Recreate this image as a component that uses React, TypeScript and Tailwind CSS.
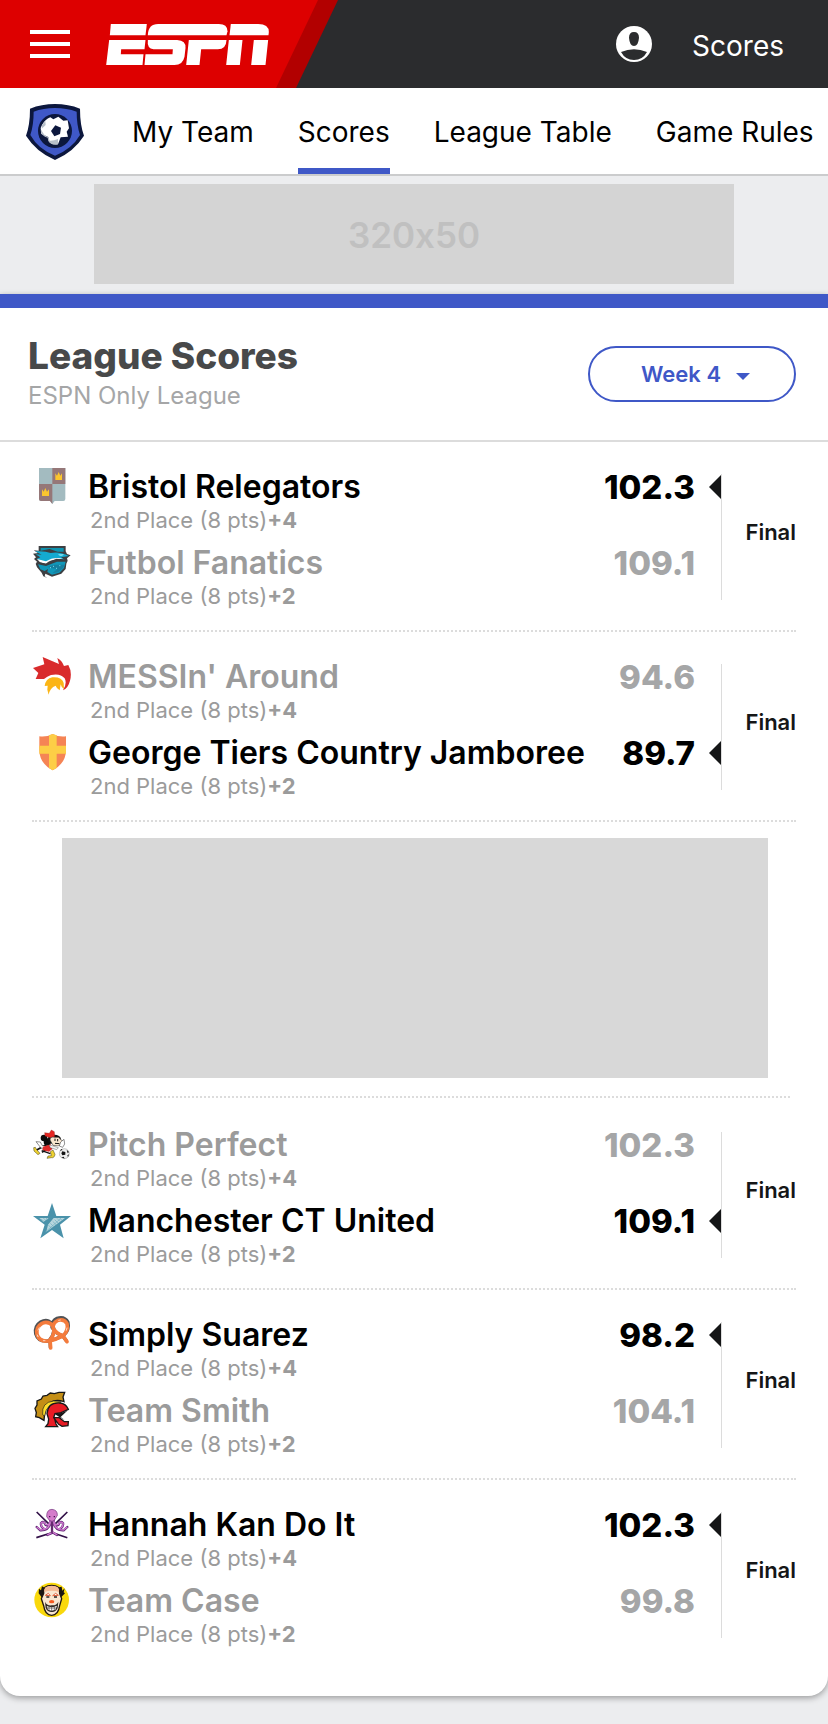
import type { ReactNode } from "react";

type Team = { name: string; gain: string; score: string; won: boolean; icon: ReactNode };

const Crest = ({ box, children }: { box: string; children: ReactNode }) => (
  <svg viewBox={box} className="size-10 shrink-0" aria-hidden="true">
    {children}
  </svg>
);

const bristol = (
  <Crest box="36 48 120 120">
    <path d="M57 54H136V147Q136 153 130 153H104L97 162L90 153H63Q57 153 57 147Z" fill="#a3bbc0" />
    <path d="M97 54H136V102H97ZM57 102H97V162L90 153H63Q57 153 57 147Z" fill="#957778" />
    <path d="M106 70L111 77L116 66L121 77L126 70V90H106ZM66 118L71 125L76 114L81 125L87 118V138H66Z" fill="#fbc62e" />
  </Crest>
);
const futbol = (
  <Crest box="36 276 120 120">
    <path d="M56 288H137V304L141 312L152 316L141 325L143 332L139 341L137 357L124 371L96 380L76 371L74 379L82 384L70 379L65 368L51 352L47 341L52 336L42 327L48 322L39 311L54 309L41 301L56 302Z" fill="#3d3f42" />
    <path d="M62 294H131V305H113L89 297L62 302Z" fill="#0d94b0" />
    <path d="M45 304Q75 302 92 309Q118 303 147 318L123 322L134 329L106 324L79 337L61 332L50 327L61 322L47 313L65 314Z" fill="#14aad0" />
    <path d="M51 327L78 334Q101 319 129 326L113 328Q91 329 78 341L60 337Z" fill="#fff" />
    <path d="M50 337L78 343L110 328L136 331" fill="none" stroke="#3d3f42" strokeWidth="4" />
    <path d="M54 343L78 348L111 335H137L132 354L118 368L96 374L82 366L84 357L74 363L61 358Z" fill="#1097b9" />
    <path d="M82 351L103 344H134L129 354L115 366L97 370L111 358Z" fill="#167f9f" />
    <path d="M116 314H130L123 317ZM90 353H93M99 349H102M108 355H111M118 347H121" fill="none" stroke="#7bdcec" strokeWidth="3" />
  </Crest>
);
const messi = (
  <Crest box="36 48 120 120">
    <path d="M39 84L73 73L68 51L117 72L112 54Q126 62 132 78L145 75Q157 96 150 122Q145 143 129 151Q142 130 134 115Q121 99 93 105Q81 109 72 117H47L55 99Z" fill="#d92b2c" />
    <path d="M74 138Q77 116 97 112Q126 110 131 129L132 147Q124 143 122 133L119 151Q110 146 107 137Q90 143 86 164L82 149L83 137Z" fill="#fbb516" />
  </Crest>
);
const george = (
  <Crest box="36 276 120 120">
    <path d="M58 289Q79 292 98 282Q117 292 138 289V327Q139 369 98 391Q57 369 58 327Z" fill="#f58455" />
    <path d="M87 286L98 282L110 286V317H138V341H110V384L98 391L87 384V341H58V317H87Z" fill="#fdce46" />
  </Crest>
);
const pitch = (
  <Crest box="36 42 120 120">
    <circle cx="72" cy="84" r="10" fill="#0b0b0b" />
    <circle cx="82" cy="96" r="11" fill="#0b0b0b" />
    <ellipse cx="103" cy="88" rx="20" ry="14" fill="#111" />
    <path d="M74 68L88 70L94 60L103 65L104 80L91 83L75 78Z" fill="#e52722" stroke="#7e1715" strokeWidth="1" />
    <path d="M90 90Q91 79 104 82L116 82Q122 91 131 94L128 102Q115 111 99 106Z" fill="#f9e7cf" stroke="#222" strokeWidth="1.5" />
    <path d="M105 86V93M113 87V94M105 100L118 101" stroke="#111" strokeWidth="3" />
    <path d="M83 102L62 113L49 121M89 112L75 121L66 127" fill="none" stroke="#111" strokeWidth="5" />
    <path d="M48 95L61 96L67 107L83 109L80 116L63 114ZM122 96L132 88L134 102L128 112L118 108Z" fill="#fff" stroke="#222" strokeWidth="1.5" />
    <path d="M69 110L92 103L97 117L87 125L67 120Z" fill="#e02b2a" />
    <path d="M87 104L115 113L110 119L91 113Z" fill="#f4f4f4" stroke="#222" />
    <path d="M41 113Q47 108 50 119L60 130L54 134L42 123ZM91 125L99 120L105 133Q103 145 94 143L81 145L84 138L94 137Z" fill="#eed231" stroke="#423b12" strokeWidth="1.5" />
    <path d="M65 122L91 131" stroke="#111" strokeWidth="4" />
    <circle cx="133" cy="131" r="15" fill="#eee" stroke="#666" />
    <path d="M127 124L136 126L136 134L127 136L124 130ZM119 122L124 117L128 120ZM140 119L147 126L143 130ZM142 136L147 133L144 142ZM124 142L131 140L134 146Z" fill="#111" />
  </Crest>
);
const star = (
  <Crest box="36 270 120 120">
    <path d="M96 279L109 318H153L120 344L131 385L96 360L61 385L74 344L39 318H83Z" fill="#4a92aa" />
    <path d="M58 324H86L70 336ZM101 324H135L116 338L79 365L84 344Z" fill="#b8d6dd" />
    <path d="M62 327L72 334M70 324L77 331M78 324L83 329M85 345L94 354M91 340L101 350M98 334L108 344M104 329L114 339M111 325L120 334M119 325L127 331M76 366L123 325" stroke="#6eadc0" strokeWidth="2" />
  </Crest>
);
const pretzel = (
  <Crest box="36 42 120 120">
    <g fill="none" strokeLinecap="round" strokeLinejoin="round">
      <path d="M96 72Q82 54 62 66Q43 78 47 101Q54 125 82 123Q105 120 131 106Q149 90 144 67Q134 48 111 55Q95 62 96 82M96 74Q110 94 90 118L91 142M96 82Q107 103 128 107L139 122" stroke="#515356" strokeWidth="10" />
      <path d="M99 78Q85 62 66 70Q47 81 51 103Q58 125 82 123Q107 120 130 106Q146 92 141 71Q133 56 114 61Q99 67 99 84M98 78Q108 98 90 120L92 144M99 84Q109 102 128 107L141 125" stroke="#f47b3c" strokeWidth="11" />
      <path d="M54 90L58 83M52 105L54 110M70 122L75 122M116 61L121 60M141 84L139 91" stroke="#fff" strokeWidth="2" />
    </g>
  </Crest>
);
const helmet = (
  <Crest box="36 270 120 120">
    <path d="M72 361L58 353L47 350L49 338L45 325L51 315L51 303L64 297L69 288L81 286L91 279L103 281L117 277H134L129 291L132 305Q108 296 92 307Q73 320 72 361Z" fill="#c48f16" stroke="#171717" strokeWidth="4" />
    <path d="M68 344Q64 307 101 303L124 305L119 309Q79 308 74 348Z" fill="#ffe02a" stroke="#171717" strokeWidth="2" />
    <path d="M77 380H113L108 372L103 353L118 353L133 365L145 365L144 377L126 379L116 373L101 353L105 341L120 339L145 328Q138 311 120 309Q84 306 81 341L86 357L84 371Z" fill="#e81c25" stroke="#171717" strokeWidth="4" />
    <path d="M105 343L123 339L142 332L122 351L134 360L118 351Z" fill="#171717" />
  </Crest>
);
const octopus = (
  <Crest box="36 42 120 120">
    <path d="M50 66L88 103M142 66L104 103M49 143L93 129M142 143L100 129" stroke="#321047" strokeWidth="5" />
    <g fill="none" strokeLinecap="round">
      <path d="M91 87Q91 111 77 105Q72 91 63 99Q61 112 75 118M101 87Q101 111 115 105Q120 91 129 99Q131 112 117 118M91 99Q86 122 61 121L50 111M101 99Q106 122 131 121L142 111M96 92V129L82 135M96 126L111 135" stroke="#5e2574" strokeWidth="7" />
      <path d="M91 85Q91 109 77 103Q71 92 63 99Q62 113 76 117M101 85Q101 109 115 103Q121 92 129 99Q130 113 116 117M91 98Q86 120 62 120L51 112M101 98Q106 120 130 120L141 112M96 88V128L83 134M96 125L110 134" stroke="#cf79cf" strokeWidth="4" />
    </g>
    <path d="M88 91L80 80Q79 59 96 58Q113 60 112 76L103 91L96 94Z" fill="#d57ccb" stroke="#70347b" strokeWidth="2" />
    <path d="M87 80H91M101 80H105M96 95V130" stroke="#43154f" strokeWidth="4" />
  </Crest>
);
const clown = (
  <Crest box="36 270 120 120">
    <circle cx="95" cy="330" r="52" fill="#f9d80c" />
    <path d="M66 323L56 310L57 296L63 301L66 289L74 293V323ZM117 323V292L125 290L127 302L134 295L131 307L135 310L124 321Z" fill="#191512" />
    <path d="M71 310Q68 286 95 286Q122 286 119 310L125 326L119 347Q115 376 95 376Q75 376 71 347L64 326Z" fill="#f8e6d0" stroke="#21170f" strokeWidth="4" />
    <path d="M73 306Q69 287 95 287Q121 287 117 306Q96 298 73 306Z" fill="#f4ba95" />
    <path d="M76 316L85 310L91 317ZM98 317L107 310L115 316Z" fill="#fff" stroke="#df603b" strokeWidth="3" />
    <path d="M79 321H88M102 321H111" stroke="#222" strokeWidth="4" />
    <ellipse cx="95" cy="335" rx="8" ry="5" fill="#f65a20" />
    <path d="M75 335Q81 348 95 346Q110 347 115 335L113 354Q107 367 95 366Q82 366 77 354Z" fill="#302a25" />
    <path d="M80 348L90 351H101L111 347L106 359L95 362L84 359Z" fill="#fff" />
    <path d="M87 348V361M95 349V363M103 348V361M80 354H110" stroke="#484039" strokeWidth="2" />
  </Crest>
);

const early: Team[][] = [
  [
    { name: "Bristol Relegators", gain: "+4", score: "102.3", won: true, icon: bristol },
    { name: "Futbol Fanatics", gain: "+2", score: "109.1", won: false, icon: futbol },
  ],
  [
    { name: "MESSIn' Around", gain: "+4", score: "94.6", won: false, icon: messi },
    { name: "George Tiers Country Jamboree", gain: "+2", score: "89.7", won: true, icon: george },
  ],
];
const late: Team[][] = [
  [
    { name: "Pitch Perfect", gain: "+4", score: "102.3", won: false, icon: pitch },
    { name: "Manchester CT United", gain: "+2", score: "109.1", won: true, icon: star },
  ],
  [
    { name: "Simply Suarez", gain: "+4", score: "98.2", won: true, icon: pretzel },
    { name: "Team Smith", gain: "+2", score: "104.1", won: false, icon: helmet },
  ],
  [
    { name: "Hannah Kan Do It", gain: "+4", score: "102.3", won: true, icon: octopus },
    { name: "Team Case", gain: "+2", score: "99.8", won: false, icon: clown },
  ],
];

function TeamRow({ team }: { team: Team }) {
  return (
    <div className="flex h-[76px] items-start">
      {team.icon}
      <div className="ml-4 min-w-0 flex-1 whitespace-nowrap">
        <h2 className={`text-[32px] leading-[42px] font-semibold ${team.won ? "text-black" : "text-[#9b9b9b]"}`}>{team.name}</h2>
        <p className="-mt-0.5 pl-0.5 text-[22px] leading-7 text-[#9b9b9b]">
          2nd Place (8 pts)<b>{team.gain}</b>
        </p>
      </div>
      <span className={`text-[33px] leading-[42px] font-extrabold ${team.won ? "text-black" : "text-[#a5a6a7]"}`}>{team.score}</span>
      <svg viewBox="0 0 13 26" className={`mt-2 -mr-px ml-3.5 h-[26px] w-[13px] shrink-0 ${team.won ? "" : "invisible"}`} aria-hidden="true">
        <path d="M13 0V26L0 13Z" fill="#151617" />
      </svg>
    </div>
  );
}

function Match({ teams, last = false }: { teams: Team[]; last?: boolean }) {
  return (
    <article className={`mx-8 border-b-2 border-dotted pt-6 pb-3 ${last ? "border-transparent" : "border-[#dcdcdc]"}`}>
      <div className="flex">
        <div className="min-w-0 flex-1">
          {teams.map((team) => (
            <TeamRow key={team.name} team={team} />
          ))}
        </div>
        <div className="mt-2 flex h-[126px] w-[75px] shrink-0 items-start justify-end border-l border-[#dcdcdc] pt-11 text-[22px] leading-7 font-semibold text-[#151617]">
          Final
        </div>
      </div>
    </article>
  );
}

export default function App() {
  return (
    <div className="min-h-screen bg-[#ecedef] pb-7 font-['Inter',sans-serif]">
      <header className="flex h-[88px] items-center justify-between bg-[#2b2c2e] pr-11 text-white">
        <div className="h-full w-[338px] bg-[#b20000] [clip-path:polygon(0_0,100%_0,296px_100%,0_100%)]">
          <div className="flex h-full w-[318px] items-center bg-[#dd0000] pl-[30px] [clip-path:polygon(0_0,100%_0,276px_100%,0_100%)]">
            <button type="button" aria-label="Menu" className="flex w-10 flex-col gap-2">
              <span className="h-1 w-full bg-white" />
              <span className="h-1 w-full bg-white" />
              <span className="h-1 w-full bg-white" />
            </button>
            <a href="#home" aria-label="ESPN" className="ml-9">
              <svg viewBox="0 0 488 123" className="h-[41px] w-[163px]" fill="#fff">
                <path d="M14 0H122L118 34H11Z" />
                <path d="M125 34Q126 0 156 0H338Q364 0 364 22L361 34Z" />
                <path d="M374 0H456Q488 0 488 24L487 34H370Z" />
                <path d="M9 48H118L115 76H45L44 91H112L109 123H0Z" />
                <path d="M125 48H213Q240 50 238 72L235 98Q230 123 205 123H115L118 91H199L200 76H142Q122 74 125 48Z" />
                <path d="M248 48H361Q360 76 335 76H285L280 123H240Z" />
                <path d="M368 48H409L401 123H360ZM443 48H486L478 123H435Z" />
              </svg>
            </a>
          </div>
        </div>
        <div className="flex items-center gap-10">
          <a href="#account" aria-label="Account">
            <svg viewBox="0 0 108 108" className="size-9">
              <circle cx="54" cy="54" r="54" fill="#fff" />
              <path d="M39 35Q39 18 54 18Q69 18 69 35Q67 60 54 60Q41 60 39 35ZM15 78Q54 62 93 78Q80 102 54 102Q28 102 15 78Z" fill="#2b2c2e" />
            </svg>
          </a>
          <a href="#scores" className="pt-1 text-[28px] leading-9">Scores</a>
        </div>
      </header>

      <nav className="flex h-[88px] items-center border-b-2 border-[#cbcccd] bg-white pl-[26px] text-[28px] leading-9 whitespace-nowrap text-black">
        <a href="#league" aria-label="League home" className="mr-12 shrink-0 pt-0.5">
          <svg viewBox="78 312 174 168" className="h-14 w-[58px]">
            <path d="M165 312Q205 312 240 326Q240 375 252 407Q222 455 165 480Q108 455 78 407Q90 375 90 326Q125 312 165 312Z" fill="#0c173d" />
            <path d="M165 324Q200 324 230 335Q230 375 240 405Q215 448 165 467Q115 448 91 405Q101 375 101 335Q130 324 165 324Z" fill="#3f58c7" />
            <circle cx="165" cy="393" r="51" fill="#0c173d" />
            <path d="M126 375Q135 358 151 352L160 358L175 350L190 362L203 361L207 385L200 395L204 410L182 412L174 433Q153 435 146 424L145 411L124 402L122 384Z" fill="#fff" />
            <path d="M124 389Q131 407 145 411L149 422Q160 423 174 417V433Q153 437 145 422L143 413Q125 409 122 392ZM126 375L136 363L137 375L125 386Z" fill="#b8c0ca" />
            <path d="M166 376L183 383L180 402L163 409L153 393Z" fill="#0c173d" />
          </svg>
        </a>
        <div className="flex h-full items-stretch gap-11">
          <a href="#team" className="flex items-center pt-0.5">My Team</a>
          <a href="#scores" aria-current="page" className="flex items-center border-b-[6px] border-[#3f58c7] pt-2">Scores</a>
          <a href="#table" className="flex items-center pt-0.5">League Table</a>
          <a href="#rules" className="flex items-center pt-0.5">Game Rules</a>
        </div>
      </nav>

      <aside className="px-6 pt-2 pb-2.5">
        <div className="mx-auto flex h-[100px] max-w-[640px] items-center justify-center bg-[#d4d4d4] pt-0.5 text-[35px] font-semibold text-[#c0c0c0] [font-feature-settings:'calt'_0]">320x50</div>
      </aside>

      <main className="rounded-b-[20px] border-t-[14px] border-[#3f58c7] bg-white pb-[26px] shadow-[0_2px_6px_rgba(0,0,0,0.35)]">
        <div className="flex items-start justify-between border-b-2 border-[#dcdcdc] pt-[26px] pr-8 pb-6 pl-7">
          <div className="pb-0.5">
            <h1 className="text-[37px] leading-11 font-extrabold text-[#48494a]">League Scores</h1>
            <p className="text-2xl leading-9 text-[#a5a6a7]">ESPN Only League</p>
          </div>
          <div className="relative mt-3">
            <select aria-label="Week" className="h-14 w-52 appearance-none rounded-full border-2 border-[#3f58c7] bg-white pl-[51px] text-[22px] font-semibold text-[#3f58c7]">
              <option>Week 4</option>
              <option>Week 3</option>
              <option>Week 2</option>
              <option>Week 1</option>
            </select>
            <svg viewBox="0 0 14 7" className="pointer-events-none absolute top-[27px] right-[46px] h-[7px] w-3.5" aria-hidden="true">
              <path d="M0 0H14L7 7Z" fill="#3f58c7" />
            </svg>
          </div>
        </div>

        <section aria-label="Week 4 results">
          {early.map((teams) => (
            <Match key={teams[0].name} teams={teams} />
          ))}
          <div className="mr-[38px] ml-8 border-b-2 border-dotted border-[#dcdcdc] pt-4 pb-[18px]">
            <div className="mr-[22px] ml-[30px] h-60 bg-[#d8d8d8]" />
          </div>
          <div className="pt-0.5">
            {late.map((teams, i) => (
              <Match key={teams[0].name} teams={teams} last={i === late.length - 1} />
            ))}
          </div>
        </section>
      </main>
    </div>
  );
}
